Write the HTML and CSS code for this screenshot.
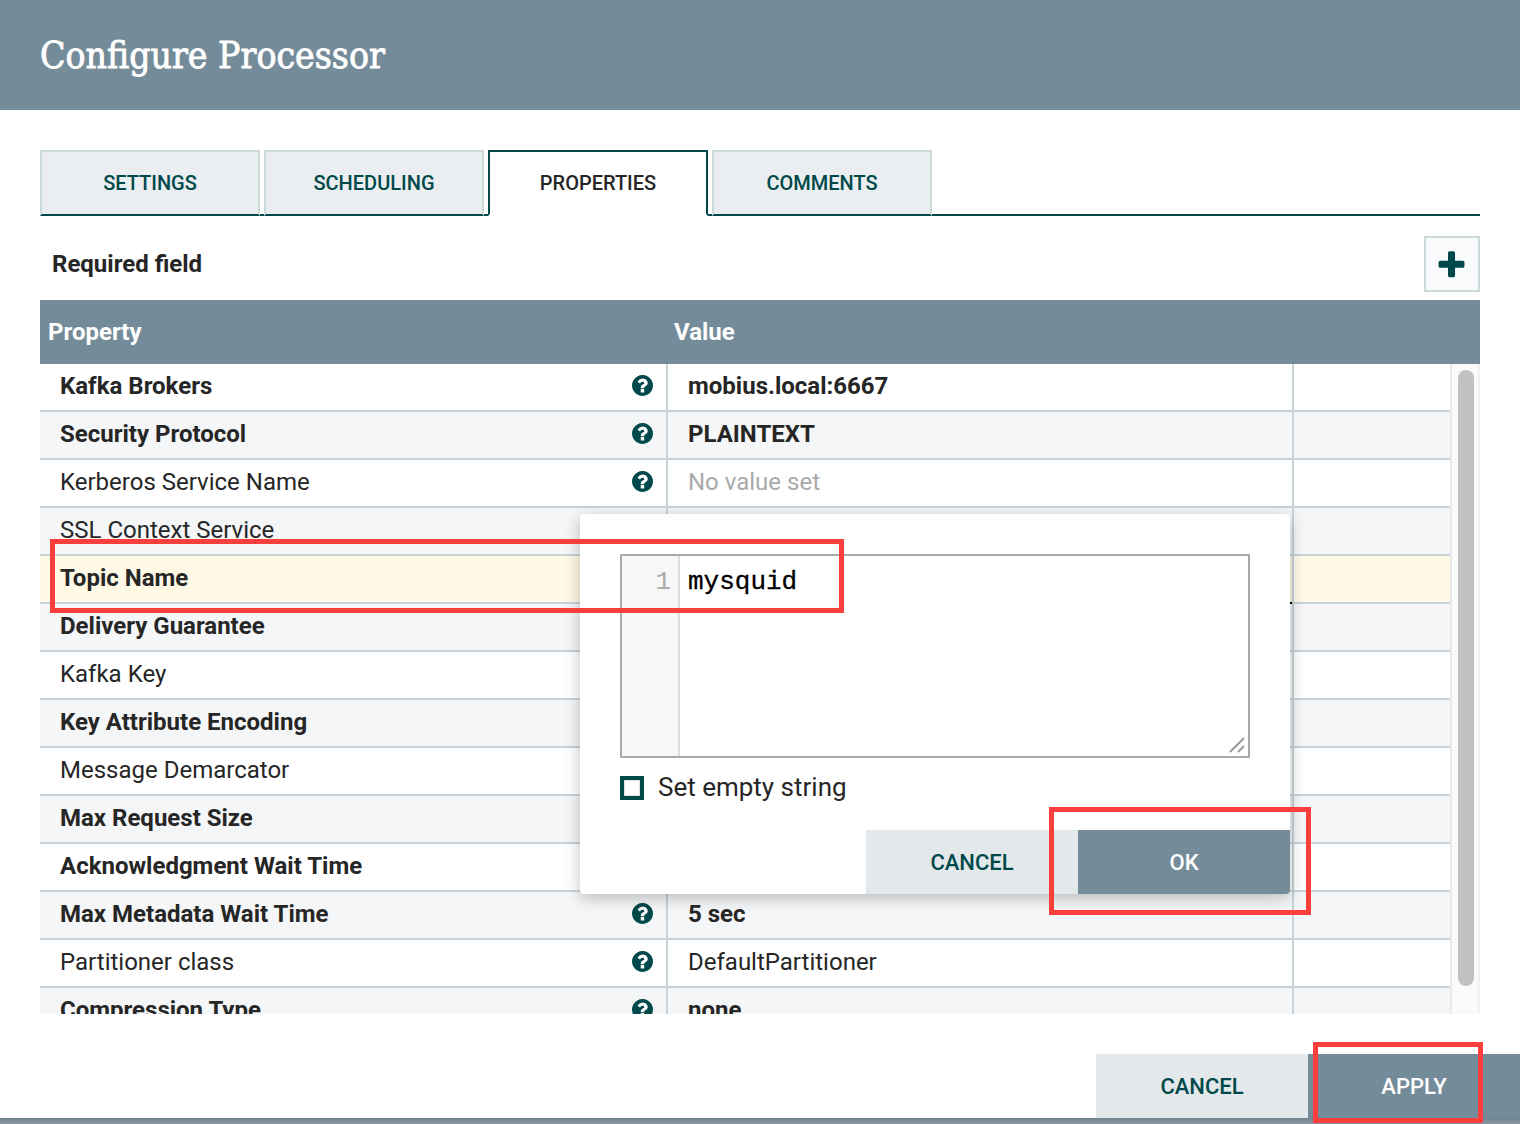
FILE: index.html
```html
<!DOCTYPE html>
<html lang="en">
<head>
    <meta charset="UTF-8">
    <title>Configure Processor</title>
    <link rel="stylesheet" href="styles.css">
</head>
<body>
    <svg class="icon-defs" width="0" height="0">
        <symbol id="icon-help" viewBox="128 128 1536 1536">
            <path d="M1024 1376v-192q0-14-9-23t-23-9h-192q-14 0-23 9t-9 23v192q0 14 9 23t23 9h192q14 0 23-9t9-23zm256-672q0-88-55.5-163t-138.5-116-170-41q-243 0-371 213-15 24 8 42l132 100q7 6 19 6 16 0 25-12 53-68 86-92 34-24 86-24 48 0 85.5 26t37.5 59q0 38-20 61t-68 45q-63 28-115.5 86.5t-52.5 125.5v36q0 14 9 23t23 9h192q14 0 23-9t9-23q0-19 21.5-49.5t54.5-49.5q32-18 49-28.5t46-35 44.5-48 28-60.5 12.5-81zm384 192q0 209-103 385.5t-279.5 279.5-385.5 103-385.5-103-279.5-279.5-103-385.5 103-385.5 279.5-279.5 385.5-103 385.5 103 279.5 279.5 103 385.5z"/>
        </symbol>
    </svg>

    <header class="dialog-header">Configure Processor</header>

    <main class="dialog-body">
        <nav class="tabs">
            <a class="tab">SETTINGS</a>
            <a class="tab">SCHEDULING</a>
            <a class="tab tab-active">PROPERTIES</a>
            <a class="tab">COMMENTS</a>
        </nav>

        <div class="toolbar">
            <span class="required">Required field</span>
            <button class="add-btn" type="button">
                <svg viewBox="0 0 1792 1792" width="33" height="33"><path d="M1600 736v192q0 40-28 68t-68 28h-416v416q0 40-28 68t-68 28h-192q-40 0-68-28t-28-68v-416h-416q-40 0-68-28t-28-68v-192q0-40 28-68t68-28h416v-416q0-40 28-68t68-28h192q40 0 68 28t28 68v416h416q40 0 68 28t28 68z"/></svg>
            </button>
        </div>

        <div class="table-head">
            <div class="col-name">Property</div>
            <div class="col-value">Value</div>
        </div>

        <div class="table-wrap">
            <div class="rows">
                <div class="row">
                    <div class="cell-name bold">Kafka Brokers<svg class="help"><use href="#icon-help"/></svg></div>
                    <div class="cell-value bold">mobius.local:6667</div>
                    <div class="cell-action"></div>
                </div>
                <div class="row">
                    <div class="cell-name bold">Security Protocol<svg class="help"><use href="#icon-help"/></svg></div>
                    <div class="cell-value bold">PLAINTEXT</div>
                    <div class="cell-action"></div>
                </div>
                <div class="row">
                    <div class="cell-name">Kerberos Service Name<svg class="help"><use href="#icon-help"/></svg></div>
                    <div class="cell-value unset">No value set</div>
                    <div class="cell-action"></div>
                </div>
                <div class="row">
                    <div class="cell-name">SSL Context Service</div>
                    <div class="cell-value"></div>
                    <div class="cell-action"></div>
                </div>
                <div class="row row-active">
                    <div class="cell-name bold">Topic Name</div>
                    <div class="cell-value"></div>
                    <div class="cell-action"></div>
                </div>
                <div class="row">
                    <div class="cell-name bold">Delivery Guarantee</div>
                    <div class="cell-value"></div>
                    <div class="cell-action"></div>
                </div>
                <div class="row">
                    <div class="cell-name">Kafka Key</div>
                    <div class="cell-value"></div>
                    <div class="cell-action"></div>
                </div>
                <div class="row">
                    <div class="cell-name bold">Key Attribute Encoding</div>
                    <div class="cell-value"></div>
                    <div class="cell-action"></div>
                </div>
                <div class="row">
                    <div class="cell-name">Message Demarcator</div>
                    <div class="cell-value"></div>
                    <div class="cell-action"></div>
                </div>
                <div class="row">
                    <div class="cell-name bold">Max Request Size</div>
                    <div class="cell-value"></div>
                    <div class="cell-action"></div>
                </div>
                <div class="row">
                    <div class="cell-name bold">Acknowledgment Wait Time</div>
                    <div class="cell-value"></div>
                    <div class="cell-action"></div>
                </div>
                <div class="row">
                    <div class="cell-name bold">Max Metadata Wait Time<svg class="help"><use href="#icon-help"/></svg></div>
                    <div class="cell-value bold">5 sec</div>
                    <div class="cell-action"></div>
                </div>
                <div class="row">
                    <div class="cell-name">Partitioner class<svg class="help"><use href="#icon-help"/></svg></div>
                    <div class="cell-value">DefaultPartitioner</div>
                    <div class="cell-action"></div>
                </div>
                <div class="row">
                    <div class="cell-name bold">Compression Type<svg class="help"><use href="#icon-help"/></svg></div>
                    <div class="cell-value bold">none</div>
                    <div class="cell-action"></div>
                </div>
            </div>
            <div class="scrollbar"><div class="scroll-thumb"></div></div>
        </div>
    </main>

    <footer class="dialog-footer">
        <button class="btn btn-light" type="button">CANCEL</button>
        <button class="btn btn-dark" type="button">APPLY</button>
    </footer>
    <div class="bottom-bar"></div>

    <!-- value editor popup -->
    <div class="editor-popup">
        <div class="editor">
            <div class="gutter">1</div>
            <div class="code">mysquid</div>
            <svg class="grip" width="16" height="16" viewBox="0 0 16 16"><path d="M1 15 15 1M9 15l6-6" stroke="#999" stroke-width="2" fill="none"/></svg>
        </div>
        <label class="empty-string"><span class="checkbox"></span>Set empty string</label>
        <div class="popup-actions">
            <button class="btn btn-light" type="button">CANCEL</button>
            <button class="btn btn-dark btn-last" type="button">OK</button>
        </div>
    </div>

    <!-- stray pixel at the popup corner -->
    <div class="corner-dot"></div>

    <!-- red annotation boxes -->
    <div class="mark mark-topic"></div>
    <div class="mark mark-ok"></div>
    <div class="mark mark-apply"></div>
</body>
</html>
```

FILE: styles.css
```css
/* Base */
html, body {
    margin: 0;
    padding: 0;
    height: 1124px;
    overflow: hidden;
}

body {
    position: relative;
    display: flex;
    flex-direction: column;
    font-family: Roboto, "Liberation Sans", sans-serif;
    font-size: 24px;
    color: #262626;
    background-color: #fff;
}

.icon-defs {
    position: absolute;
}

/* Header */
.dialog-header {
    height: 110px;
    flex: none;
    box-sizing: border-box;
    padding: 33px 40px 0;
    background-color: #748c9a;
    color: #fff;
    font-family: "DejaVu Serif Condensed", "Liberation Serif", serif;
    font-size: 37px;
    font-weight: 400;
    line-height: 46px;
    -webkit-text-stroke: 0.8px #fff;
}

.dialog-body {
    height: 904px;
    flex: none;
    box-sizing: border-box;
    padding: 40px 40px 0;
    display: flex;
    flex-direction: column;
    overflow: hidden;
}

/* Tabs */
.tabs {
    display: flex;
    gap: 4px;
    height: 66px;
    flex: none;
    border-bottom: 2px solid #004849;
    box-sizing: border-box;
}

.tab {
    width: 220px;
    height: 66px;
    box-sizing: border-box;
    display: flex;
    align-items: center;
    justify-content: center;
    border: 2px solid #ccdadb;
    border-bottom: 2px solid #004849;
    background-color: #eaeef0;
    color: #004849;
    font-size: 20px;
    font-weight: 500;
}

.tab-active {
    background-color: #fff;
    color: #262626;
    border-color: #004849;
    border-bottom-color: #fff;
}

/* Toolbar */
.toolbar {
    height: 84px;
    flex: none;
    display: flex;
    align-items: flex-start;
    justify-content: space-between;
    padding: 20px 0 0 12px;
    box-sizing: border-box;
}

.required {
    font-weight: 700;
    font-size: 24px;
    line-height: 56px;
}

.add-btn {
    width: 56px;
    height: 56px;
    padding: 2px 2px 0 0;
    display: flex;
    align-items: center;
    justify-content: center;
    border: 2px solid #ccdadb;
    background-color: #f8fafb;
    fill: #004849;
}

/* Table */
.table-head {
    height: 64px;
    flex: none;
    display: flex;
    align-items: center;
    background-color: #748c9a;
    color: #fff;
    font-weight: 700;
}

.col-name {
    width: 626px;
    padding-left: 8px;
    box-sizing: border-box;
}

.col-value {
    padding-left: 8px;
}

.table-wrap {
    height: 650px;
    flex: none;
    display: flex;
    overflow: hidden;
}

.rows {
    width: 1410px;
    flex: none;
}

.row {
    height: 48px;
    display: flex;
    box-sizing: border-box;
    border-bottom: 2px solid #c7d4d9;
    line-height: 44px;
}

.row:nth-child(even) {
    background-color: #f4f6f7;
}

.row.row-active {
    background-color: #fff9e6;
}

.cell-name {
    width: 628px;
    flex: none;
    box-sizing: border-box;
    padding-left: 20px;
    border-right: 2px solid #c7d4d9;
    position: relative;
}

.cell-value {
    width: 626px;
    flex: none;
    box-sizing: border-box;
    padding-left: 20px;
    border-right: 2px solid #c7d4d9;
}

.cell-action {
    flex: 1;
}

.bold {
    font-weight: 700;
}

.unset {
    color: #aaa;
}

.help {
    position: absolute;
    right: 13px;
    top: 11px;
    width: 21px;
    height: 21px;
    fill: #004849;
}

.scrollbar {
    width: 30px;
    flex: none;
    box-sizing: border-box;
    border-left: 2px solid #e8e8e8;
    border-right: 2px solid #f0f0f0;
    background-color: #fafafa;
    padding: 6px 4px 0 6px;
}

.scroll-thumb {
    width: 16px;
    height: 616px;
    border-radius: 8px;
    background-color: #c1c1c1;
}

/* Buttons */
.btn {
    width: 212px;
    height: 64px;
    padding: 0;
    border: 0;
    font-family: Roboto, "Liberation Sans", sans-serif;
    font-size: 22px;
    font-weight: 500;
}

.btn-light {
    background-color: #e3e8eb;
    color: #004849;
}

.btn-dark {
    background-color: #748c9a;
    color: #fff;
}

.dialog-footer {
    height: 104px;
    flex: none;
    box-sizing: border-box;
    padding-top: 40px;
    display: flex;
    justify-content: flex-end;
}

.bottom-bar {
    height: 6px;
    flex: none;
    background: linear-gradient(#6f838d, #8c9ba3);
}

/* Value editor popup */
.editor-popup {
    position: absolute;
    left: 580px;
    top: 514px;
    width: 710px;
    height: 380px;
    box-sizing: border-box;
    padding: 40px 40px 0;
    background-color: #fff;
    border-radius: 4px;
    box-shadow: 0 4px 16px rgba(0, 0, 0, 0.25);
}

.editor {
    position: relative;
    width: 630px;
    height: 204px;
    box-sizing: border-box;
    border: 2px solid #aaa;
    display: flex;
}

.gutter {
    width: 58px;
    flex: none;
    box-sizing: border-box;
    padding: 11px 7px 0 0;
    text-align: right;
    border-right: 2px solid #ddd;
    background-color: #f7f7f7;
    color: #aaa;
    font-family: "Liberation Mono", monospace;
    font-size: 26px;
    line-height: 30px;
}

.code {
    padding: 11px 0 0 8px;
    color: #000;
    font-family: "Liberation Mono", monospace;
    font-size: 26px;
    line-height: 30px;
    -webkit-text-stroke: 0.3px #000;
}

.grip {
    position: absolute;
    right: 3px;
    bottom: 3px;
}

.empty-string {
    display: flex;
    align-items: center;
    gap: 14px;
    margin-top: 13px;
    height: 32px;
    font-size: 26px;
    color: #262626;
}

.checkbox {
    width: 24px;
    height: 24px;
    margin-top: 2px;
    box-sizing: border-box;
    border: 4px solid #004849;
    background-color: #fff;
    box-shadow: inset 0 0 2px rgba(0, 0, 0, 0.4);
}

.popup-actions {
    position: absolute;
    right: 0;
    bottom: 0;
    display: flex;
}

.btn-last {
    border-bottom-right-radius: 4px;
}

.corner-dot {
    position: absolute;
    left: 1290px;
    top: 602px;
    width: 2px;
    height: 2px;
    background-color: #000;
}

/* Red annotations */
.mark {
    position: absolute;
    box-sizing: border-box;
    border: 5px solid #fb3f3d;
}

.mark-topic {
    left: 50px;
    top: 539px;
    width: 794px;
    height: 74px;
}

.mark-ok {
    left: 1049px;
    top: 807px;
    width: 262px;
    height: 108px;
}

.mark-apply {
    left: 1313px;
    top: 1042px;
    width: 170px;
    height: 81px;
}
```
